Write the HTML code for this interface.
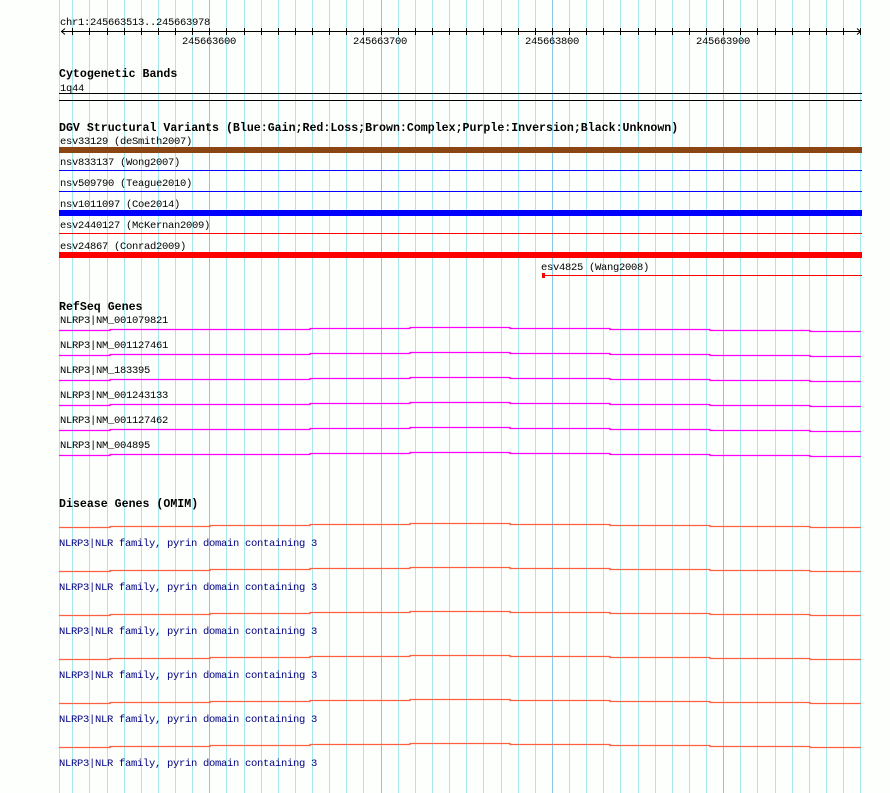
<!DOCTYPE html>
<html><head><meta charset="utf-8"><style>
html,body{margin:0;padding:0;background:#fdfffd;}
body{width:890px;height:793px;position:relative;overflow:hidden;font-family:"Liberation Mono","DejaVu Sans Mono",monospace;font-size:10.5px;letter-spacing:-0.3px;color:#000;}
.t{position:absolute;line-height:12px;white-space:pre;margin-top:2px;}
.b{font-weight:bold;font-size:11.6px;letter-spacing:0;}
.d{color:#000080;}
svg{position:absolute;left:0;top:0;}
</style></head><body>
<svg width="890" height="793" id="g"></svg>
<div class="t" style="left:60px;top:15px">chr1:245663513..245663978</div>
<div class="t" style="left:182px;top:34px">245663600</div>
<div class="t" style="left:353px;top:34px">245663700</div>
<div class="t" style="left:525px;top:34px">245663800</div>
<div class="t" style="left:696px;top:34px">245663900</div>
<div class="t b" style="left:59px;top:67px">Cytogenetic Bands</div>
<div class="t" style="left:60px;top:81px">1q44</div>
<div class="t b" style="left:59px;top:121px">DGV Structural Variants (Blue:Gain;Red:Loss;Brown:Complex;Purple:Inversion;Black:Unknown)</div>
<div class="t" style="left:60px;top:134px">esv33129 (deSmith2007)</div>
<div class="t" style="left:60px;top:155px">nsv833137 (Wong2007)</div>
<div class="t" style="left:60px;top:176px">nsv509790 (Teague2010)</div>
<div class="t" style="left:60px;top:197px">nsv1011097 (Coe2014)</div>
<div class="t" style="left:60px;top:218px">esv2440127 (McKernan2009)</div>
<div class="t" style="left:60px;top:239px">esv24867 (Conrad2009)</div>
<div class="t" style="left:541px;top:260px">esv4825 (Wang2008)</div>
<div class="t b" style="left:59px;top:300px">RefSeq Genes</div>
<div class="t" style="left:60px;top:313px">NLRP3|NM_001079821</div>
<div class="t" style="left:60px;top:338px">NLRP3|NM_001127461</div>
<div class="t" style="left:60px;top:363px">NLRP3|NM_183395</div>
<div class="t" style="left:60px;top:388px">NLRP3|NM_001243133</div>
<div class="t" style="left:60px;top:413px">NLRP3|NM_001127462</div>
<div class="t" style="left:60px;top:438px">NLRP3|NM_004895</div>
<div class="t b" style="left:59px;top:497px">Disease Genes (OMIM)</div>
<div class="t d" style="left:59px;top:536px">NLRP3|NLR family, pyrin domain containing 3</div>
<div class="t d" style="left:59px;top:580px">NLRP3|NLR family, pyrin domain containing 3</div>
<div class="t d" style="left:59px;top:624px">NLRP3|NLR family, pyrin domain containing 3</div>
<div class="t d" style="left:59px;top:668px">NLRP3|NLR family, pyrin domain containing 3</div>
<div class="t d" style="left:59px;top:712px">NLRP3|NLR family, pyrin domain containing 3</div>
<div class="t d" style="left:59px;top:756px">NLRP3|NLR family, pyrin domain containing 3</div>
<script>
var s='';
s+='<line x1="59.5" y1="0" x2="59.5" y2="793" stroke="#a8e8ec"/>';
for(var k=-8;k<=38;k++){var x=Math.round(209.3+17.13*k)+0.5;var maj=(k%10==0);
s+='<line x1="'+x+'" y1="0" x2="'+x+'" y2="793" stroke="'+(maj?'#88c8e8':'#a8e8ec')+'"/>';
s+='<line x1="'+x+'" y1="28" x2="'+x+'" y2="35" stroke="#000"/>';}
s+='<line x1="61" y1="31.5" x2="861" y2="31.5" stroke="#000"/>';
s+='<path d="M65 28.5 L61.5 31.5 L65 34.5 M857 28.5 L860.5 31.5 L857 34.5" fill="none" stroke="#000"/>';
s+='<line x1="59" y1="93.5" x2="862" y2="93.5" stroke="#000"/><line x1="59" y1="100.5" x2="862" y2="100.5" stroke="#000"/>';
s+='<rect x="59" y="147" width="803" height="6" fill="#8b4513"/>';
s+='<line x1="59" y1="170.5" x2="862" y2="170.5" stroke="#0000ff"/>';
s+='<line x1="59" y1="191.5" x2="862" y2="191.5" stroke="#0000ff"/>';
s+='<rect x="59" y="210" width="803" height="6" fill="#0000ff"/>';
s+='<line x1="59" y1="233.5" x2="862" y2="233.5" stroke="#ff0000"/>';
s+='<rect x="59" y="252" width="803" height="6" fill="#ff0000"/>';
s+='<line x1="542" y1="275.5" x2="862" y2="275.5" stroke="#ff0000"/><rect x="542" y="273" width="3" height="5" fill="#ff0000"/>';
function g(y){return 'M59 '+(y+.5)+'H110V'+(y-.5)+'H310V'+(y-1.5)+'H410V'+(y-2.5)+'H510V'+(y-1.5)+'H610V'+(y-.5)+'H710V'+(y+.5)+'H810V'+(y+1.5)+'H861';}
for(var i=0;i<6;i++)s+='<path d="'+g(330+25*i)+'" fill="none" stroke="#ff00ff" stroke-width="1.3"/>';
function d(y){return 'M59 '+(y+.5)+'H110V'+(y-.5)+'H210V'+(y-1.5)+'H310V'+(y-2.5)+'H410V'+(y-3.5)+'H510V'+(y-2.5)+'H610V'+(y-1.5)+'H710V'+(y-.5)+'H810V'+(y+.5)+'H861';}
for(var i=0;i<6;i++)s+='<path d="'+d(527+44*i)+'" fill="none" stroke="#ff6040" stroke-width="1.3"/>';
document.getElementById('g').innerHTML=s;
</script>
</body></html>
